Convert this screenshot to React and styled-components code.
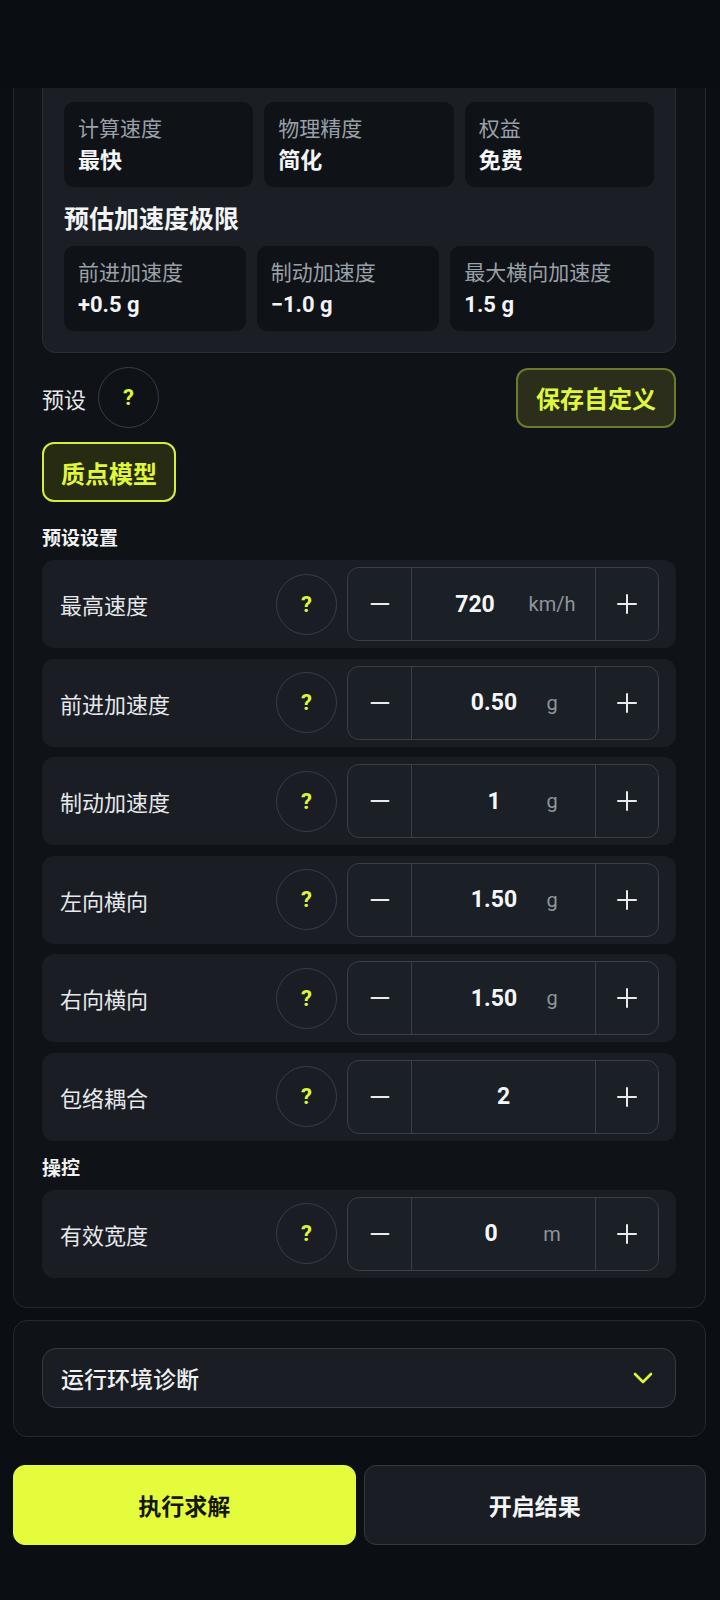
import React from 'react';
import styled, { createGlobalStyle } from 'styled-components';

const GlobalStyle = createGlobalStyle`
  * { box-sizing: border-box; }
  body {
    margin: 0;
    background: #0b0e13;
    font-family: "Roboto", "Noto Sans CJK SC", "Noto Sans", sans-serif;
    color: #eceef1;
  }
`;

const Page = styled.div`
  width: 720px;
  min-height: 1600px;
  background: #0b0e13;
  padding: 0 14px 0 13px;
`;

const Header = styled.div`
  height: 88px;
  margin: 0 -14px 0 -13px;
  background: #0a0d12;
`;

const Panel = styled.section`
  background: #0f1318;
  border: 1px solid #242930;
  border-top: none;
  border-radius: 0 0 14px 14px;
  padding: 0 29px 29px 28px;
`;

const Summary = styled.div`
  background: #1b1f25;
  border: 1px solid #2a2f36;
  border-top: none;
  border-radius: 0 0 14px 14px;
  padding: 14px 21px 21px;
`;

const InfoGrid = styled.div`
  display: grid;
  grid-template-columns: ${({ cols }) => cols};
  gap: 11px;
`;

const InfoBox = styled.div`
  height: 85px;
  background: #0f1217;
  border-radius: 10px;
  padding: 13px 14px 0;
  display: flex;
  flex-direction: column;
  gap: 3px;
`;

const InfoLabel = styled.div`
  font-size: 21px;
  line-height: 28px;
  color: #9aa0a8;
  white-space: nowrap;
`;

const InfoValue = styled.div`
  font-size: 22px;
  line-height: 30px;
  font-weight: 700;
  color: #f3f4f6;
`;

const Heading = styled.h3`
  margin: 16px 0 9px;
  font-size: 25px;
  line-height: 34px;
  font-weight: 700;
  color: #f3f4f6;
`;

const PresetBar = styled.div`
  display: flex;
  align-items: center;
  justify-content: space-between;
  margin-top: 14px;
`;

const PresetLeft = styled.div`
  display: flex;
  align-items: center;
  gap: 12px;
  font-size: 22px;
  color: #e6e8eb;
`;

const Help = styled.button`
  flex: none;
  width: 61px;
  height: 61px;
  border-radius: 50%;
  border: 1.5px solid #383d45;
  background: transparent;
  color: #def53b;
  font-family: inherit;
  font-size: 22px;
  font-weight: 700;
  padding: 0;
  display: flex;
  align-items: center;
  justify-content: center;
`;

const AccentButton = styled.button`
  height: 60px;
  padding: 0 ${({ $pad }) => $pad}px;
  border-radius: 12px;
  border: 2px solid ${({ $active }) => ($active ? '#d6ef36' : '#6c782d')};
  background: ${({ $active }) => ($active ? '#262b12' : '#2a2e1b')};
  color: #e0f83b;
  font-family: inherit;
  font-size: 24px;
  font-weight: 700;
`;

const ModelRow = styled.div`
  margin-top: 14px;
`;

const GroupLabel = styled.div`
  margin: ${({ $top }) => $top}px 0 8px;
  font-size: 19px;
  line-height: 26px;
  font-weight: 700;
  color: #f0f2f4;
`;

const RowList = styled.div`
  display: flex;
  flex-direction: column;
  gap: 10.5px;
`;

const ParamRow = styled.div`
  height: 88px;
  background: #1a1d23;
  border-radius: 12px;
  padding: 0 17px 0 18px;
  display: flex;
  align-items: center;
  gap: 10px;
`;

const ParamLabel = styled.div`
  flex: 1;
  font-size: 22px;
  color: #e6e8eb;
`;

const Stepper = styled.div`
  width: 312px;
  height: 74px;
  display: grid;
  grid-template-columns: 64px 1fr 63px;
  border: 1.5px solid #3a3f47;
  border-radius: 12px;
  background: #1b1f26;
  overflow: hidden;
`;

const StepBtn = styled.button`
  border: none;
  background: transparent;
  color: #e8eaed;
  display: flex;
  align-items: center;
  justify-content: center;
  padding: 0;
  ${({ $side }) => ($side === 'left' ? 'border-right: 1.5px solid #3a3f47;' : 'border-left: 1.5px solid #3a3f47;')}
`;

const ValueCell = styled.div`
  position: relative;
  display: flex;
  align-items: center;
`;

const Value = styled.div`
  width: 100%;
  text-align: center;
  padding-right: ${({ $unitW }) => ($unitW ? $unitW + 9 : 0)}px;
  font-size: 23px;
  font-weight: 700;
  color: #f5f6f8;
`;

const Unit = styled.span`
  position: absolute;
  left: 140px;
  top: 50%;
  transform: translate(-50%, -50%);
  font-size: 20px;
  color: #8f959d;
`;

const DiagPanel = styled.section`
  margin-top: 12px;
  background: #0f1318;
  border: 1px solid #242930;
  border-radius: 14px;
  padding: 27px 29px 28px 28px;
`;

const Select = styled.div`
  height: 60px;
  border: 1.5px solid #363b43;
  border-radius: 14px;
  background: #1a1d23;
  display: flex;
  align-items: center;
  justify-content: space-between;
  padding: 0 22px 0 18px;
  font-size: 23px;
  font-weight: 500;
  color: #eef0f2;
`;

const Actions = styled.div`
  margin-top: 28px;
  display: grid;
  grid-template-columns: 1fr 1fr;
  gap: 8px;
`;

const ActionButton = styled.button`
  height: 80px;
  border-radius: 12px;
  font-family: inherit;
  font-size: 23px;
  font-weight: 700;
  border: 1.5px solid ${({ $primary }) => ($primary ? '#e4fc3c' : '#33383f')};
  background: ${({ $primary }) => ($primary ? '#e4fc3c' : '#1a1d23')};
  color: ${({ $primary }) => ($primary ? '#14170a' : '#f3f4f6')};
`;

const MinusIcon = () => (
  <svg width="20" height="20" viewBox="0 0 20 20">
    <line x1="1.5" y1="10" x2="18.5" y2="10" stroke="currentColor" strokeWidth="2" strokeLinecap="round" />
  </svg>
);

const PlusIcon = () => (
  <svg width="20" height="20" viewBox="0 0 20 20">
    <line x1="1" y1="10" x2="19" y2="10" stroke="currentColor" strokeWidth="2" strokeLinecap="round" />
    <line x1="10" y1="1" x2="10" y2="19" stroke="currentColor" strokeWidth="2" strokeLinecap="round" />
  </svg>
);

const Chevron = () => (
  <svg width="20" height="14" viewBox="0 0 20 14">
    <polyline points="2,3 10,11 18,3" fill="none" stroke="#dff53b" strokeWidth="2.6" strokeLinecap="round" strokeLinejoin="round" />
  </svg>
);

const topInfo = [
  { label: '计算速度', value: '最快' },
  { label: '物理精度', value: '简化' },
  { label: '权益', value: '免费' },
];

const accelInfo = [
  { label: '前进加速度', value: '+0.5 g' },
  { label: '制动加速度', value: '−1.0 g' },
  { label: '最大横向加速度', value: '1.5 g' },
];

const presetParams = [
  { label: '最高速度', value: '720', unit: 'km/h', unitW: 48 },
  { label: '前进加速度', value: '0.50', unit: 'g', unitW: 10 },
  { label: '制动加速度', value: '1', unit: 'g', unitW: 10 },
  { label: '左向横向', value: '1.50', unit: 'g', unitW: 10 },
  { label: '右向横向', value: '1.50', unit: 'g', unitW: 10 },
  { label: '包络耦合', value: '2' },
];

const controlParams = [{ label: '有效宽度', value: '0', unit: 'm', unitW: 16 }];

const Param = ({ label, value, unit, unitW }) => (
  <ParamRow>
    <ParamLabel>{label}</ParamLabel>
    <Help>?</Help>
    <Stepper>
      <StepBtn $side="left"><MinusIcon /></StepBtn>
      <ValueCell>
        <Value $unitW={unit ? unitW : 0}>{value}</Value>
        {unit && <Unit>{unit}</Unit>}
      </ValueCell>
      <StepBtn $side="right"><PlusIcon /></StepBtn>
    </Stepper>
  </ParamRow>
);

export default function App() {
  return (
    <Page>
      <GlobalStyle />
      <Header />
      <Panel>
        <Summary>
          <InfoGrid cols="1fr 1fr 1fr">
            {topInfo.map((item) => (
              <InfoBox key={item.label}>
                <InfoLabel>{item.label}</InfoLabel>
                <InfoValue>{item.value}</InfoValue>
              </InfoBox>
            ))}
          </InfoGrid>
          <Heading>预估加速度极限</Heading>
          <InfoGrid cols="182fr 183fr 204fr">
            {accelInfo.map((item) => (
              <InfoBox key={item.label}>
                <InfoLabel>{item.label}</InfoLabel>
                <InfoValue>{item.value}</InfoValue>
              </InfoBox>
            ))}
          </InfoGrid>
        </Summary>

        <PresetBar>
          <PresetLeft>
            预设
            <Help>?</Help>
          </PresetLeft>
          <AccentButton $pad={18}>保存自定义</AccentButton>
        </PresetBar>
        <ModelRow>
          <AccentButton $active $pad={17}>质点模型</AccentButton>
        </ModelRow>

        <GroupLabel $top={24}>预设设置</GroupLabel>
        <RowList>
          {presetParams.map((p) => (
            <Param key={p.label} {...p} />
          ))}
        </RowList>

        <GroupLabel $top={15}>操控</GroupLabel>
        <RowList>
          {controlParams.map((p) => (
            <Param key={p.label} {...p} />
          ))}
        </RowList>
      </Panel>

      <DiagPanel>
        <Select>
          运行环境诊断
          <Chevron />
        </Select>
      </DiagPanel>

      <Actions>
        <ActionButton $primary>执行求解</ActionButton>
        <ActionButton>开启结果</ActionButton>
      </Actions>
    </Page>
  );
}
